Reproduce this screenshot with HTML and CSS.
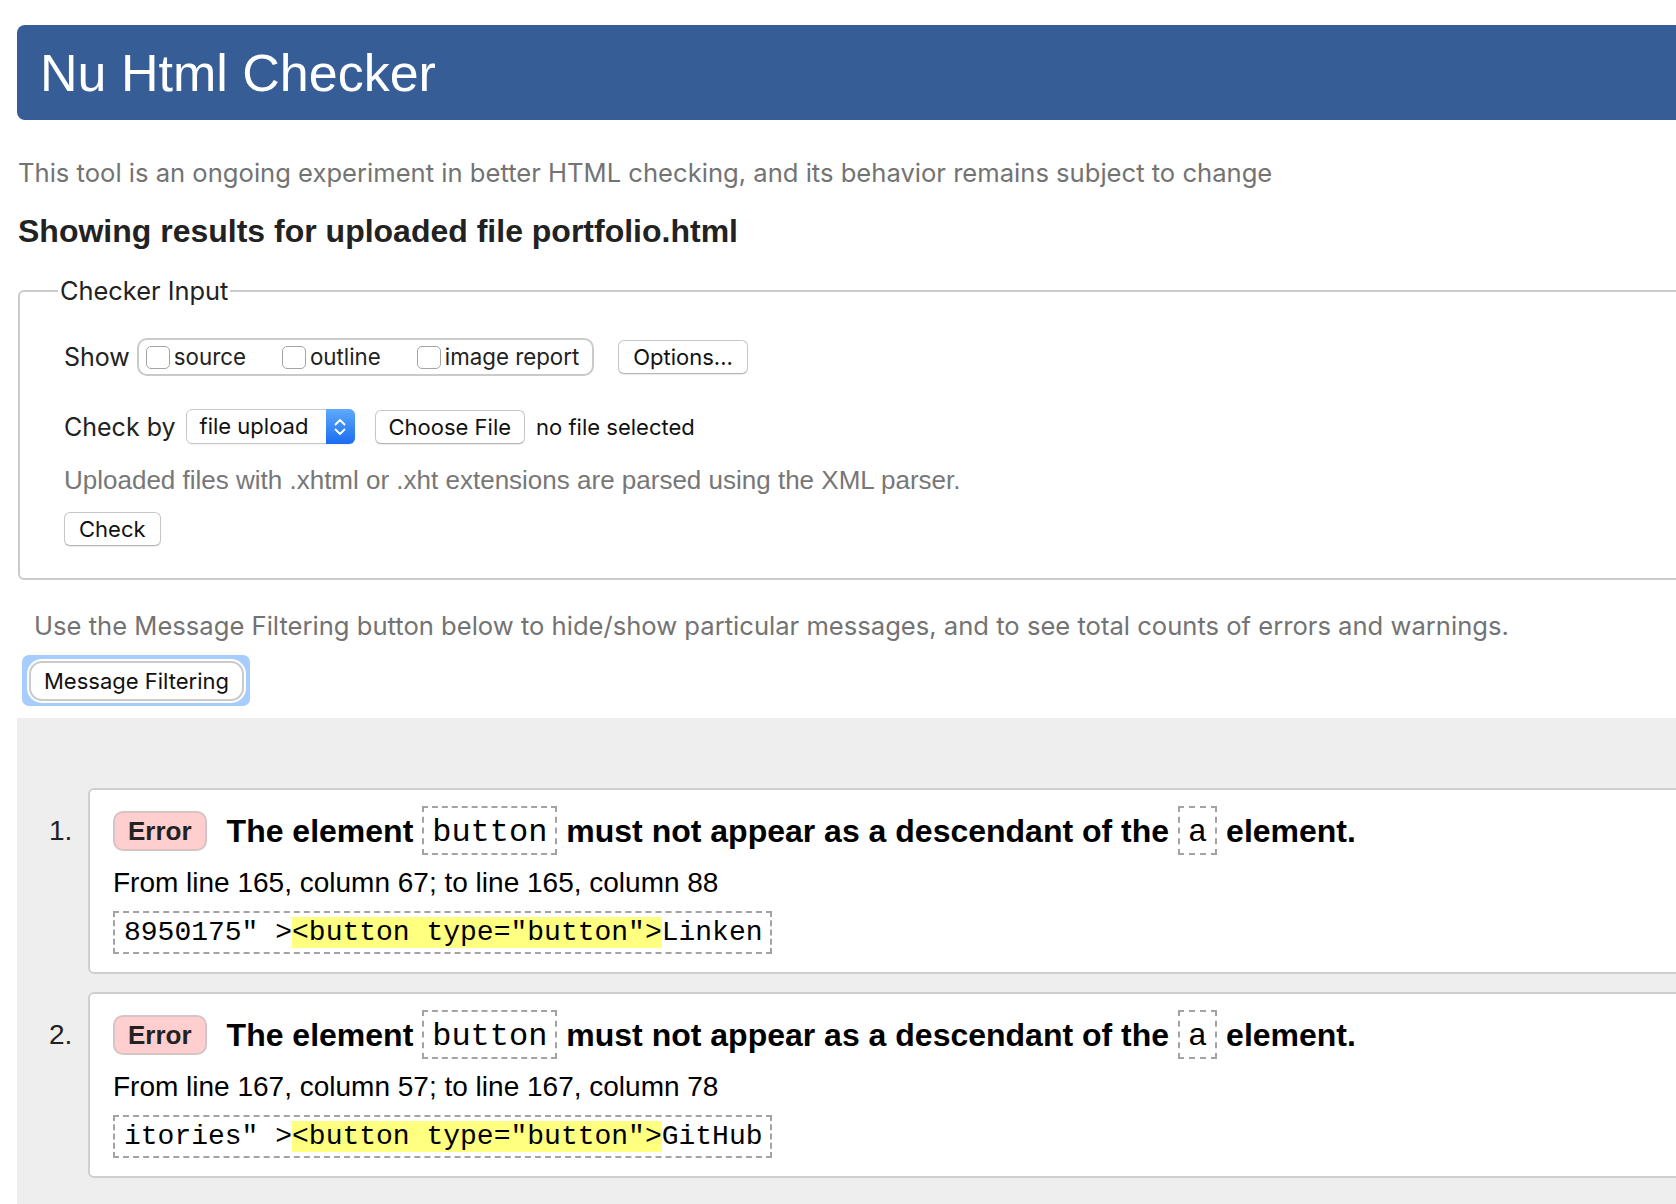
FILE: index.html
```html
<!DOCTYPE html>
<html lang="en">
<head>
<meta charset="utf-8">
<title>Nu Html Checker</title>
<link rel="stylesheet" href="styles.css">
</head>
<body>
<div class="page">
  <header class="masthead"><h1>Nu Html Checker</h1></header>
  <p class="intro">This tool is an ongoing experiment in better HTML checking, and its behavior remains subject to change</p>
  <h2 class="results-heading">Showing results for uploaded file portfolio.html</h2>
  <fieldset class="checker-input">
    <legend>Checker Input</legend>
    <div class="row show-row">
      <span class="label">Show</span>
      <div class="toggle-group">
        <label class="toggle"><span class="checkbox"></span>source</label>
        <label class="toggle"><span class="checkbox"></span>outline</label>
        <label class="toggle"><span class="checkbox"></span>image report</label>
      </div>
      <button class="btn btn-options" type="button">Options...</button>
    </div>
    <div class="row checkby-row">
      <span class="label">Check by</span>
      <div class="select">
        <span class="select-value">file upload</span>
        <span class="select-arrows"><svg width="14" height="24" viewBox="0 0 14 24"><path d="M2.5 9.5 L7 5 L11.5 9.5" fill="none" stroke="#fff" stroke-width="1.8" stroke-linecap="round" stroke-linejoin="round"/><path d="M2.5 14.5 L7 19 L11.5 14.5" fill="none" stroke="#fff" stroke-width="1.8" stroke-linecap="round" stroke-linejoin="round"/></svg></span>
      </div>
      <button class="btn btn-choose" type="button">Choose File</button>
      <span class="file-status">no file selected</span>
    </div>
    <p class="note">Uploaded files with .xhtml or .xht extensions are parsed using the XML parser.</p>
    <button class="btn btn-check" type="button">Check</button>
  </fieldset>
  <p class="filter-note">Use the Message Filtering button below to hide/show particular messages, and to see total counts of errors and warnings.</p>
  <div class="filter-bar">
    <div class="focus-ring"><button class="btn btn-filter" type="button">Message Filtering</button></div>
  </div>
  <section class="results">
    <ol class="messages">
      <li class="message">
        <span class="msg-num">1.</span>
        <div class="msg-card">
          <p class="msg-title"><span class="badge">Error</span>The element <code class="tag">button</code> must not appear as a descendant of the <code class="tag">a</code> element.</p>
          <p class="location">From line 165, column 67; to line 165, column 88</p>
          <p class="extract"><code>8950175" &gt;<mark>&lt;button type="button"&gt;</mark>Linken</code></p>
        </div>
      </li>
      <li class="message">
        <span class="msg-num">2.</span>
        <div class="msg-card">
          <p class="msg-title"><span class="badge">Error</span>The element <code class="tag">button</code> must not appear as a descendant of the <code class="tag">a</code> element.</p>
          <p class="location">From line 167, column 57; to line 167, column 78</p>
          <p class="extract"><code>itories" &gt;<mark>&lt;button type="button"&gt;</mark>GitHub</code></p>
        </div>
      </li>
    </ol>
  </section>
</div>
</body>
</html>
```

FILE: styles.css
```css
html, body {
  margin: 0;
  padding: 0;
  background: #fff;
  overflow: hidden;
}

body {
  font-family: "Liberation Sans", Arial, sans-serif;
  color: #222;
}

.page {
  padding: 25px 0 0 17px;
  margin-right: -40px;
}

/* header */
.masthead {
  height: 95px;
  background: #365d95;
  border-radius: 8px;
  display: flex;
  align-items: center;
  padding-left: 23px;
}

.masthead h1 {
  margin: 0;
  font: 400 52px/1 "Liberation Sans", Arial, sans-serif;
  color: #fff;
}

.intro {
  margin: 38px 0 0 1px;
  font: 400 25.6px/30px Inter, "Noto Sans", sans-serif;
  color: #737373;
}

.results-heading {
  margin: 23px 0 0 1px;
  font: 700 32px/40px "Liberation Sans", Arial, sans-serif;
  color: #222;
}

/* checker input */
.checker-input {
  margin: 25px 0 0 1px;
  border: 2px solid #cbcbcb;
  border-radius: 6px;
  padding: 32px 0 32px 44px;
  min-width: 0;
}

.checker-input legend {
  padding: 0 2px;
  margin-left: -6px;
  font: 400 25.4px/30px Inter, "Noto Sans", sans-serif;
  color: #222;
}

.row {
  display: flex;
  align-items: center;
}

.show-row {
  height: 38px;
}

.label {
  font: 400 25px/30px Inter, "Noto Sans", sans-serif;
  color: #222;
  margin-right: 7px;
}

.checkby-row .label {
  margin-right: 10px;
}

.toggle-group {
  height: 38px;
  box-sizing: border-box;
  border: 2px solid #cacaca;
  border-radius: 10px;
  display: flex;
  align-items: center;
  gap: 36px;
  padding: 0 13px 0 7px;
}

.toggle {
  display: flex;
  align-items: center;
  gap: 4px;
  font: 400 22.3px/26px Inter, "Noto Sans", sans-serif;
  color: #222;
}

.checkbox {
  width: 24px;
  height: 23px;
  box-sizing: border-box;
  border: 1.5px solid #a5a5a5;
  border-radius: 5px;
  background: #fff;
}

.btn {
  height: 34px;
  box-sizing: border-box;
  padding: 0 14px;
  background: #fff;
  border: 1px solid #c6c6c6;
  border-bottom-color: #b5b5b5;
  border-radius: 6px;
  box-shadow: 0 1px 1px rgba(0, 0, 0, 0.08);
  font: 400 22px/30px Inter, "Noto Sans", sans-serif;
  color: #111;
}

.btn-options {
  margin-left: 24px;
}

.checkby-row {
  margin-top: 33px;
  height: 35px;
}

.select {
  height: 35px;
  width: 169px;
  box-sizing: border-box;
  border: 1px solid #c8c8c8;
  border-radius: 6px;
  display: flex;
  box-shadow: 0 1px 1px rgba(0, 0, 0, 0.06);
}

.select-value {
  flex: 1;
  padding-left: 13px;
  font: 400 22px/33px Inter, "Noto Sans", sans-serif;
  color: #111;
}

.select-arrows {
  width: 29px;
  margin: -1px -1px -1px 0;
  background: linear-gradient(#5eaafb, #1b6cf2);
  border-radius: 0 6px 6px 0;
  display: flex;
  align-items: center;
  justify-content: center;
}

.btn-choose {
  margin-left: 20px;
  padding: 0 13px;
}

.file-status {
  margin-left: 11px;
  font: 400 22px/30px Inter, "Noto Sans", sans-serif;
  color: #111;
}

.note {
  margin: 21px 0 0;
  font: 400 26px/30px "Liberation Sans", Arial, sans-serif;
  color: #777;
}

.btn-check {
  margin-top: 17px;
  display: block;
}

.filter-note {
  margin: 31px 0 0 17px;
  font: 400 25.6px/30px Inter, "Noto Sans", sans-serif;
  color: #737373;
}

.filter-bar {
  display: flex;
  margin: 14px 0 0 5px;
}

.focus-ring {
  display: flex;
  padding: 6px 6px 5px 7px;
  background: #a6cdfd;
  border-radius: 7px;
}

.btn-filter {
  height: 40px;
  border: 2px solid #cacaca;
  border-radius: 13px;
  box-shadow: 0 0 0 2px #fff;
  padding: 0 13px;
}

/* results */
.results {
  margin-top: 12px;
  background: #eee;
  padding: 70px 0 60px 32px;
}

.messages {
  list-style: none;
  margin: 0;
  padding: 0;
}

.message {
  display: flex;
}

.message + .message {
  margin-top: 18px;
}

.msg-num {
  flex: none;
  width: 39px;
  padding-top: 18px;
  font: 400 28px/50px "Liberation Sans", Arial, sans-serif;
  color: #222;
}

.msg-card {
  flex: 1;
  background: #fff;
  border: 2px solid #cfcfcf;
  border-radius: 6px;
  padding: 16px 0 18px 23px;
}

.msg-card p {
  margin: 0;
}

.msg-title {
  font: 700 32px/50px "Liberation Sans", Arial, sans-serif;
  color: #000;
  white-space: nowrap;
}

.badge {
  display: inline-block;
  vertical-align: top;
  margin: 5px 20px 0 0;
  height: 40px;
  box-sizing: border-box;
  border: 2px solid #d6c3c3;
  border-radius: 10px;
  background: #ffcfcf;
  padding: 0 13px;
  font: 700 26px/36px "Liberation Sans", Arial, sans-serif;
  color: #222;
}

.tag {
  display: inline-block;
  vertical-align: top;
  border: 2px dashed #a3a3a3;
  padding: 5px 8px 0;
  font: 400 32px/40px "Liberation Mono", "Courier New", monospace;
  color: #000;
}

.location {
  margin-top: 10px !important;
  font: 400 28px/34px "Liberation Sans", Arial, sans-serif;
  color: #000;
}

.extract {
  margin-top: 11px !important;
}

.extract code {
  display: inline-block;
  border: 2px dashed #a3a3a3;
  padding: 0 7px 0 9px;
  font: 400 28px/39px "Liberation Mono", "Courier New", monospace;
  color: #000;
  white-space: pre;
}

.extract mark {
  background: #ffff80;
  color: inherit;
}
```
